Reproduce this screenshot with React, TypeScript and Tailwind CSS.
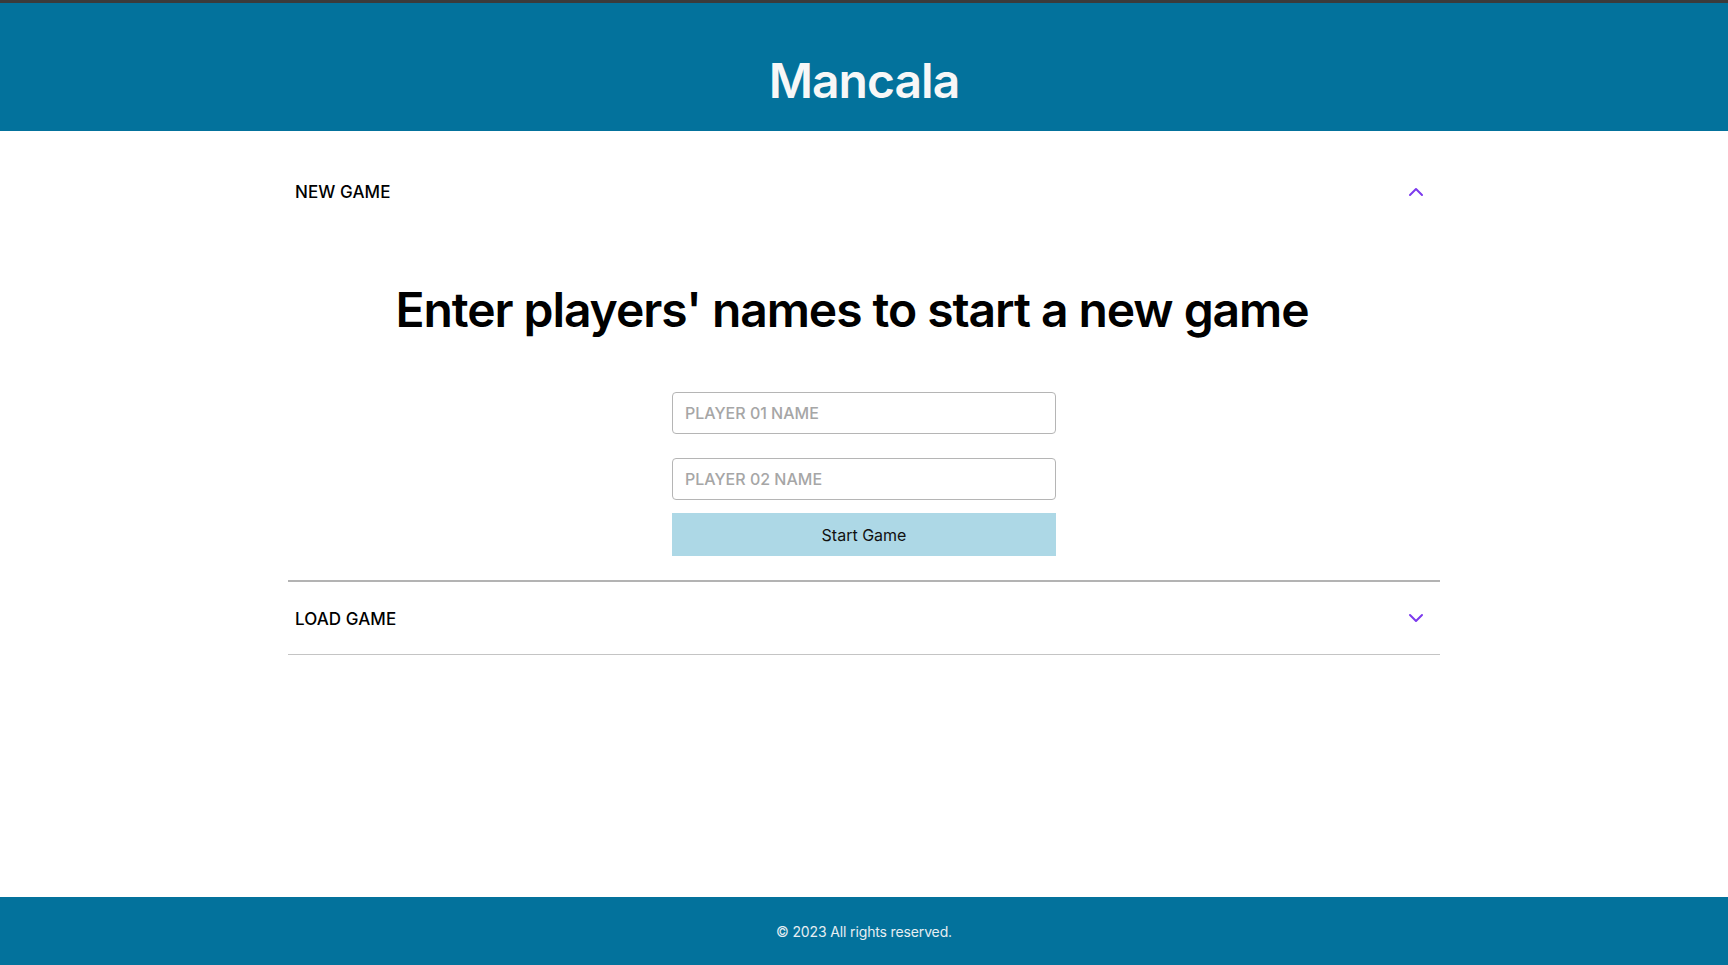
import React from "react";

function ChevronUp() {
  return (
    <svg width="16" height="10" viewBox="0 0 16 10" fill="none" className="block">
      <path d="M2 8 L8 2 L14 8" stroke="#7c3aed" strokeWidth="2" strokeLinecap="round" strokeLinejoin="round" />
    </svg>
  );
}

function ChevronDown() {
  return (
    <svg width="16" height="10" viewBox="0 0 16 10" fill="none" className="block">
      <path d="M2 2 L8 8 L14 2" stroke="#7c3aed" strokeWidth="2" strokeLinecap="round" strokeLinejoin="round" />
    </svg>
  );
}

export default function App() {
  return (
    <div
      className="min-h-screen flex flex-col bg-white text-black"
      style={{ fontFamily: "Inter, 'Noto Sans', 'Liberation Sans', sans-serif" }}
    >
      <div className="h-[3px] bg-[#3b3b3b]" />
      <header className="h-[128px] bg-[#03729c] flex items-center justify-center pt-[28px]">
        <h1 className="text-[48px] leading-none font-semibold text-[#f7f7f7] tracking-[-0.02em]">Mancala</h1>
      </header>

      <main className="flex-1 w-full">
        <div className="max-w-[1152px] mx-auto pt-[26px]">
          <div className="border-b-2 border-[#b3b3b3]">
            <button className="w-full h-[70px] flex items-center justify-between pl-[7px] pr-[16px]">
              <span className="mt-[2px] text-[17px] font-medium tracking-[0.005em]">NEW GAME</span>
              <ChevronUp />
            </button>
            <div className="flex flex-col items-center pb-[24px]">
              <h2 className="mt-[59px] pr-[24px] text-[48px] leading-[48px] font-semibold tracking-[-0.022em]">
                Enter players' names to start a new game
              </h2>
              <input
                className="mt-[58px] w-[384px] h-[42px] border border-[#b5b5b5] rounded-[4px] px-[12px] text-[16px] font-medium placeholder:text-[#a6a6a6] outline-none"
                placeholder="PLAYER 01 NAME"
              />
              <input
                className="mt-[24px] w-[384px] h-[42px] border border-[#b5b5b5] rounded-[4px] px-[12px] text-[16px] font-medium placeholder:text-[#a6a6a6] outline-none"
                placeholder="PLAYER 02 NAME"
              />
              <button className="mt-[13px] w-[384px] h-[43px] bg-[#add8e6] text-[16px] text-[#111]">Start Game</button>
            </div>
          </div>
          <div className="border-b border-[#c4c4c4]">
            <button className="w-full h-[72px] flex items-center justify-between pl-[7px] pr-[16px]">
              <span className="mt-[4px] text-[17px] font-medium tracking-[0.005em]">LOAD GAME</span>
              <ChevronDown />
            </button>
          </div>
        </div>
      </main>

      <footer className="h-[68px] bg-[#03729c] flex items-center justify-center">
        <p className="text-[14px] tracking-[-0.01em] text-[#e6eef2]">© 2023 All rights reserved.</p>
      </footer>
    </div>
  );
}
